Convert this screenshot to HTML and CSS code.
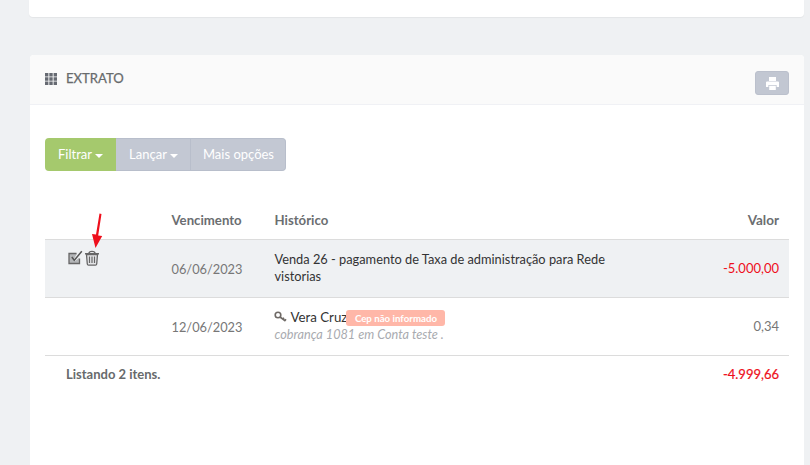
FILE: index.html
```html
<!DOCTYPE html>
<html lang="pt-BR">
<head>
<meta charset="utf-8">
<title>Extrato</title>
<link rel="stylesheet" href="styles.css">
</head>
<body>
<div class="page">
  <div class="card-top"></div>
  <section class="card">
    <header class="card-head">
      <h2 class="card-title">
        <svg class="grid-icon" width="12" height="12" viewBox="0 0 12 12"><path fill="#666a72" d="M0 0h3.400v3.400H0zM4.300 0h3.400v3.400H4.300zM8.600 0H12v3.400H8.600zM0 4.300h3.400v3.400H0zM4.300 4.300h3.400v3.400H4.300zM8.600 4.300H12v3.400H8.600zM0 8.600h3.400V12H0zM4.300 8.600h3.400V12H4.300zM8.600 8.600H12V12H8.600z"/></svg>
        EXTRATO
      </h2>
      <button class="print-btn" aria-label="Imprimir">
        <svg width="13" height="13" viewBox="0 0 13 13"><path fill="#fff" d="M3 0h7v4H3zM1 4.600h11a1 1 0 0 1 1 1V10h-2.400V8H2.400v2H0V5.600a1 1 0 0 1 1-1zM3.200 8.800h6.600V13H3.200z"/></svg>
      </button>
    </header>
    <div class="card-body">
      <div class="btn-group">
        <button class="btn btn-green">Filtrar<span class="caret"></span></button>
        <button class="btn">Lançar<span class="caret"></span></button>
        <button class="btn">Mais opções</button>
      </div>
      <table class="extrato">
        <thead>
          <tr>
            <th class="col-actions"></th>
            <th class="col-date">Vencimento</th>
            <th class="col-hist">Histórico</th>
            <th class="col-val">Valor</th>
          </tr>
        </thead>
        <tbody>
          <tr class="row-hl">
            <td class="col-actions cell-actions">
              <span class="actions">
                <svg width="15" height="15" viewBox="0 0 15 15"><path fill="#b4b6b8" d="M1 3.500h8L6 9l.5 2.500L11 8v5.500H1z"/><path fill="none" stroke="#666" stroke-width="1.300" d="M11.500 8.500v5H1V3.500h7.500"/><path fill="none" stroke="#555" stroke-width="1.500" d="M3.800 7l2.500 3.200L13.800 1.300"/></svg>
                <svg width="16" height="16" viewBox="0 0 16 16"><path fill="#e4e5e7" stroke="#666" stroke-width="1.300" d="M2.500 4.500l.8 9.500a1.300 1.300 0 0 0 1.300 1.200h6.800a1.300 1.300 0 0 0 1.300-1.200l.8-9.500z"/><path fill="none" stroke="#666" stroke-width="1.400" d="M1 3.700h14M5 3.500C5 .6 11 .6 11 3.500"/><path stroke="#666" stroke-width="1.200" d="M5.500 6.500V13M8 6.500V13M10.500 6.500V13"/></svg>
              </span>
            </td>
            <td class="col-date">06/06/2023</td>
            <td class="col-hist"><div class="hist-text">Venda 26 - pagamento de Taxa de administração para Rede vistorias</div></td>
            <td class="col-val neg">-5.000,00</td>
          </tr>
          <tr>
            <td class="col-actions"></td>
            <td class="col-date">12/06/2023</td>
            <td class="col-hist">
              <div class="hist-line">
                <svg class="key" width="14" height="12" viewBox="0 0 14 12"><circle cx="4" cy="4" r="2.800" fill="none" stroke="#6f6a66" stroke-width="1.600"/><path fill="none" stroke="#6f6a66" stroke-width="1.600" d="M6 6l5.500 4M9 8l1-1.200M11 9.500l1-1.200"/></svg><span>Vera Cruz</span><span class="badge">Cep não informado</span>
              </div>
              <div class="hist-sub">cobrança 1081 em Conta teste .</div>
            </td>
            <td class="col-val muted">0,34</td>
          </tr>
        </tbody>
        <tfoot>
          <tr>
            <td colspan="3" class="foot-label">Listando 2 itens.</td>
            <td class="col-val neg foot-val">-4.999,66</td>
          </tr>
        </tfoot>
      </table>
      <svg class="arrow" width="14" height="36" viewBox="0 0 14 36"><path fill="#ee0f1c" d="M9.500 0.500l2 .4-3.300 21.500 4 .7L5.500 35 2 21l4 .6z"/></svg>
    </div>
  </section>
</div>
</body>
</html>
```
FILE: styles.css
```css
* { box-sizing: border-box; }
html, body { margin: 0; height: 100%; overflow: hidden; }
body {
  background: #eff1f3;
  font-family: Lato, "Open Sans", sans-serif;
  font-size: 13px;
  color: #676a6c;
}
.page { padding: 0 6px 0 29px; }
.card-top {
  height: 17px;
  background: #fff;
  border-radius: 0 0 4px 4px;
  box-shadow: 0 1px 1px rgba(0, 0, 0, .05);
}
.card {
  position: relative;
  margin: 38px 0 0 1px;
  height: 420px;
  background: #fff;
  border-radius: 4px 4px 0 0;
}
.card-head {
  height: 50px;
  padding: 0 15px;
  background: #fafafa;
  border-bottom: 1px solid #f0f1f5;
  border-radius: 4px 4px 0 0;
  display: flex;
  align-items: flex-start;
  justify-content: space-between;
}
.card-title {
  margin: 15px 0 0;
  font-size: 13.100px;
  font-weight: 400;
  line-height: 17px;
  color: #676a6c;
  display: flex;
  align-items: center;
  gap: 9px;
  -webkit-text-stroke: .25px #676a6c;
}
.print-btn {
  margin: 16px 0 0;
  width: 34px;
  height: 24px;
  padding: 1px 0 0;
  background: #c2c7d2;
  border: 1px solid #bbc0cc;
  border-radius: 3px;
  display: flex;
  align-items: center;
  justify-content: center;
}
.card-body { padding: 33px 15px 0; }
.btn-group { display: flex; height: 33px; }
.btn {
  height: 33px;
  padding: 0;
  border: 1px solid #b8becb;
  border-left-width: 0;
  background: #c3c8d3;
  color: #fff;
  font-family: inherit;
  font-size: 13px;
  line-height: 29px;
}
.btn:last-child { border-radius: 0 4px 4px 0; }
.btn-green {
  width: 71px;
  background: #a5c96d;
  border: 0;
  border-radius: 4px 0 0 4px;
}
.btn:nth-child(2) { width: 75px; padding-left: 1px; }
.btn:nth-child(3) { width: 95px; padding-left: 1px; }
.caret {
  display: inline-block;
  margin-left: 3px;
  vertical-align: middle;
  border-top: 4px solid #fff;
  border-left: 4px solid transparent;
  border-right: 4px solid transparent;
}
.extrato {
  width: 744px;
  margin-top: 33px;
  border-collapse: collapse;
  table-layout: fixed;
  color: #676a6c;
}
.extrato th {
  height: 35px;
  padding: 0 0 3px;
  font-size: 13.200px;
  font-weight: 700;
  text-align: left;
  color: #6b6e71;
  border-bottom: 1px solid #dcdcdc;
}
.extrato td { height: 58px; padding: 0; border-bottom: 1px solid #dcdcdc; }
.col-actions { width: 126.500px; }
.col-date { width: 103px; color: #777; }
.extrato td.col-date { padding-top: 1px; font-size: 12.800px; }
.col-hist { width: 415px; }
.extrato .col-val { text-align: right; padding-right: 10px; }
.extrato th.col-val { font-size: 13.500px; }
.row-hl td { background: #eff1f3; }
.cell-actions { vertical-align: top; }
.actions { display: flex; align-items: center; gap: 1px; padding: 10px 0 0 23px; }
.hist-text { width: 350px; font-size: 12.800px; line-height: 17px; color: #333; }
.hist-line { display: flex; align-items: center; height: 17px; color: #333; font-size: 13.300px; line-height: 17px; margin-top: -1px; }
.key { margin: 0 3px 0 -1px; }
.badge {
  margin: 1px 0 0 -1px;
  height: 16px;
  padding: 0 8.500px;
  background: #ffb7a8;
  color: #fff;
  border-radius: 3px;
  font-size: 9.700px;
  font-weight: 700;
  line-height: 16px;
}
.hist-sub { font-size: 12.700px; font-style: italic; line-height: 17px; color: #a9abb0; }
.neg { color: #ee0f1c; }
.muted { color: #777; }
.extrato tfoot td { height: 38px; border-bottom: 0; padding-bottom: 1px; }
.foot-label { padding-left: 21px !important; font-weight: 700; font-size: 13px; color: #676a6c; }
.foot-val { font-weight: 400; -webkit-text-stroke: .2px #ee0f1c; }
.arrow { position: absolute; left: 60px; top: 158px; }
```
